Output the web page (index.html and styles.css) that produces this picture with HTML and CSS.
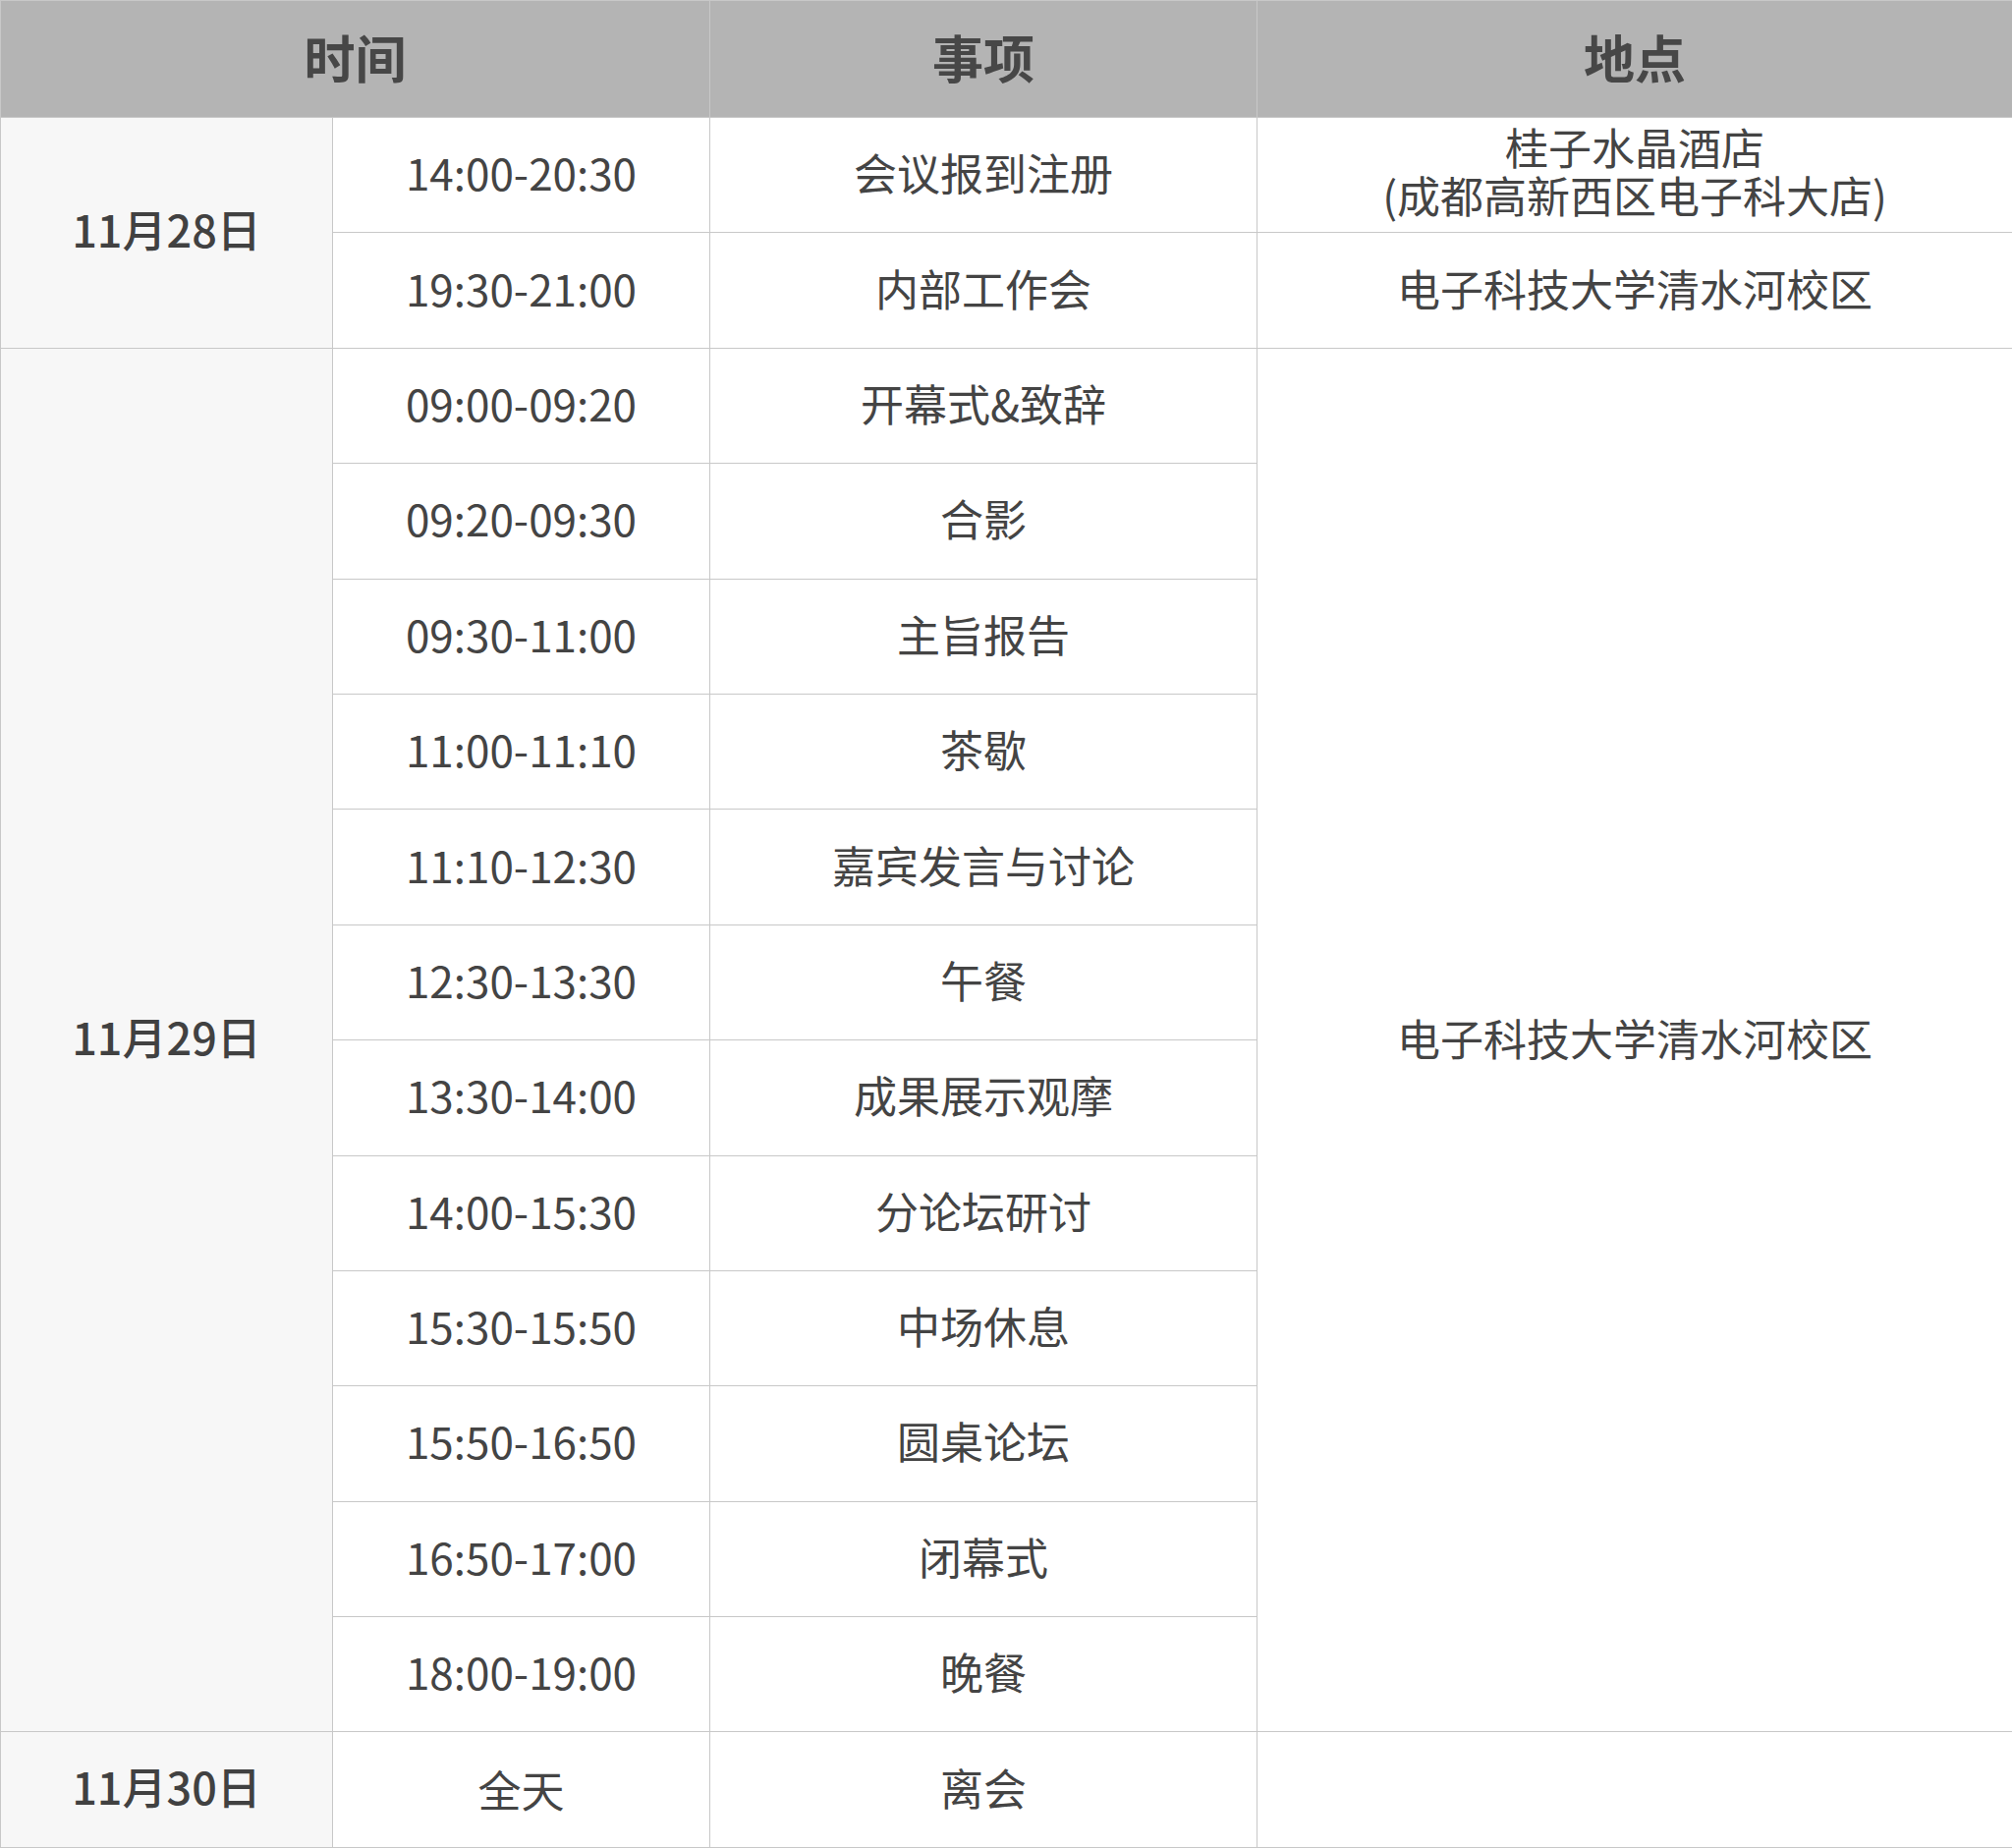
FILE: index.html
```html
<!DOCTYPE html>
<html lang="zh-CN">
<head>
<meta charset="utf-8">
<title>会议日程</title>
<link rel="stylesheet" href="styles.css">
</head>
<body>
<table class="schedule">
  <colgroup>
    <col class="c-date"><col class="c-time"><col class="c-item"><col class="c-place">
  </colgroup>
  <thead>
    <tr class="head-row">
      <th colspan="2">时间</th>
      <th>事项</th>
      <th>地点</th>
    </tr>
  </thead>
  <tbody>
    <tr>
      <td class="date" rowspan="2">11月28日</td>
      <td>14:00-20:30</td>
      <td>会议报到注册</td>
      <td class="two-line">桂子水晶酒店<br>(成都高新西区电子科大店)</td>
    </tr>
    <tr>
      <td>19:30-21:00</td>
      <td>内部工作会</td>
      <td>电子科技大学清水河校区</td>
    </tr>
    <tr>
      <td class="date" rowspan="12">11月29日</td>
      <td>09:00-09:20</td>
      <td>开幕式&amp;致辞</td>
      <td rowspan="12">电子科技大学清水河校区</td>
    </tr>
    <tr><td>09:20-09:30</td><td>合影</td></tr>
    <tr><td>09:30-11:00</td><td>主旨报告</td></tr>
    <tr><td>11:00-11:10</td><td>茶歇</td></tr>
    <tr><td>11:10-12:30</td><td>嘉宾发言与讨论</td></tr>
    <tr><td>12:30-13:30</td><td>午餐</td></tr>
    <tr><td>13:30-14:00</td><td>成果展示观摩</td></tr>
    <tr><td>14:00-15:30</td><td>分论坛研讨</td></tr>
    <tr><td>15:30-15:50</td><td>中场休息</td></tr>
    <tr><td>15:50-16:50</td><td>圆桌论坛</td></tr>
    <tr><td>16:50-17:00</td><td>闭幕式</td></tr>
    <tr><td>18:00-19:00</td><td>晚餐</td></tr>
    <tr>
      <td class="date">11月30日</td>
      <td class="low">全天</td>
      <td>离会</td>
      <td></td>
    </tr>
  </tbody>
</table>
</body>
</html>
```

FILE: styles.css
```css
html, body {
  margin: 0;
  padding: 0;
  background: #ffffff;
}

.schedule {
  width: 2048px;
  border-collapse: collapse;
  table-layout: fixed;
  font-family: "Noto Sans CJK SC", "Noto Sans", sans-serif;
  color: #444444;
  font-size: 44px;
}

.c-date { width: 338px; }
.c-time { width: 384px; }
.c-item { width: 557px; }
.c-place { width: 769px; }

.schedule th,
.schedule td {
  border: 1px solid #c8c8c8;
  text-align: center;
  vertical-align: middle;
  padding: 0 0 6px 0;
}

.head-row {
  height: 119px;
}

.head-row th {
  background: #b4b4b4;
  color: #474747;
  font-size: 52px;
  font-weight: 700;
  padding-bottom: 5px;
}

.schedule tbody tr {
  height: 117.4px;
}

.schedule td {
  line-height: 48px;
}

.schedule td.two-line {
  line-height: 49px;
  padding-bottom: 8px;
}

.schedule td.date {
  background: #f7f7f7;
  font-weight: 500;
  font-size: 45px;
  color: #414141;
  padding-bottom: 8px;
}

.schedule td.low {
  padding-bottom: 2px;
}
```
